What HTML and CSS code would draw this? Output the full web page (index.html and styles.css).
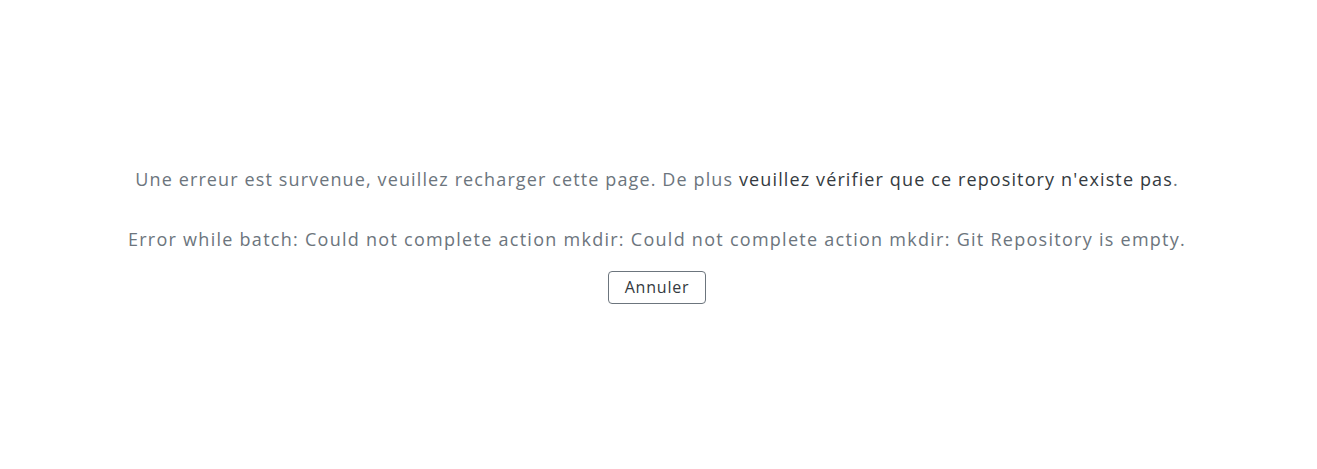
FILE: index.html
```html
<!DOCTYPE html>
<html lang="fr">
<head>
    <meta charset="UTF-8">
    <meta name="viewport" content="width=device-width, initial-scale=1.0">
    <title>Erreur</title>
    <link rel="stylesheet" href="styles.css">
</head>
<body>
    <div class="error-box">
        <p class="error-message">
            Une erreur est survenue, veuillez recharger cette page. De plus
            <span class="error-hint">veuillez vérifier que ce repository n'existe pas</span>.
        </p>
        <p class="error-detail">Error while batch: Could not complete action mkdir: Could not complete action mkdir: Git Repository is empty.</p>
        <button type="button" class="btn-cancel">Annuler</button>
    </div>
</body>
</html>
```

FILE: styles.css
```css
/* Basic reset */
* {
    margin: 0;
    padding: 0;
    box-sizing: border-box;
}

body {
    display: flex;
    align-items: center;
    justify-content: center;
    min-height: 100vh;
    padding: 0 3px 0 0;
    background-color: #fff;
    font-family: "Open Sans", Arial, sans-serif;
    color: #6c757d;
}

.error-box {
    display: flex;
    flex-direction: column;
    align-items: center;
    text-align: center;
}

.error-message,
.error-detail {
    font-size: 18px;
    line-height: 27px;
}

.error-message {
    letter-spacing: 1.12px;
}

.error-hint {
    color: #343a40;
}

.error-detail {
    margin-top: 33px;
    letter-spacing: 1.27px;
}

.btn-cancel {
    margin-top: 18px;
    width: 98px;
    height: 33px;
    font-family: inherit;
    font-size: 16px;
    letter-spacing: 0.8px;
    color: #343a40;
    background-color: #fff;
    border: 1px solid #6c757d;
    border-radius: 4px;
    cursor: pointer;
}
```
